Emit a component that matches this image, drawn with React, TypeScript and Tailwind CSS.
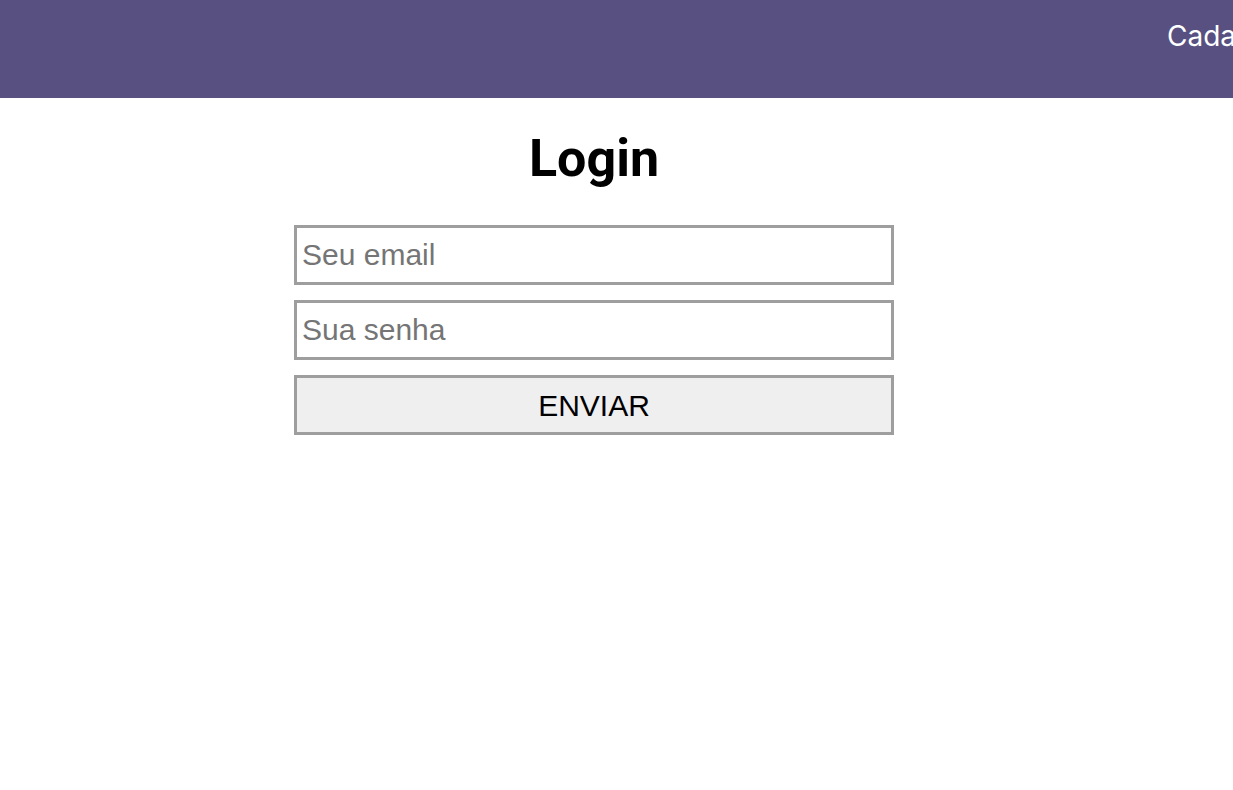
import React from "react";

export default function App() {
  return (
    <div className="min-h-[790px] w-[1233px] overflow-hidden bg-white">
      <header className="h-[98px] w-full overflow-hidden bg-[#575080]">
        <nav className="flex pl-[1167px] pt-[20px]">
          <a
            className="whitespace-nowrap text-[28px] leading-[32px] text-white"
            style={{ fontFamily: "Inter, sans-serif" }}
          >
            Cadastro
          </a>
        </nav>
      </header>
      <main className="flex w-[1188px] flex-col items-center pt-[33px]">
        <h1
          className="text-[52px] font-bold leading-[56px] text-black"
          style={{ fontFamily: "Roboto, sans-serif" }}
        >
          Login
        </h1>
        <form
          className="mt-[38px] flex w-[600px] flex-col gap-[15px]"
          style={{ fontFamily: '"Liberation Sans", Arial, sans-serif' }}
          onSubmit={(e) => e.preventDefault()}
        >
          <input
            type="email"
            placeholder="Seu email"
            className="h-[60px] w-full border-[3px] border-[#9e9e9e] bg-white px-[5px] text-[30px] text-black outline-none placeholder:text-[#757575]"
          />
          <input
            type="password"
            placeholder="Sua senha"
            className="h-[60px] w-full border-[3px] border-[#9e9e9e] bg-white px-[5px] text-[30px] text-black outline-none placeholder:text-[#757575]"
          />
          <button
            type="submit"
            className="h-[60px] w-full border-[3px] border-[#9e9e9e] bg-[#efefef] text-[30px] text-black"
          >
            ENVIAR
          </button>
        </form>
      </main>
    </div>
  );
}
